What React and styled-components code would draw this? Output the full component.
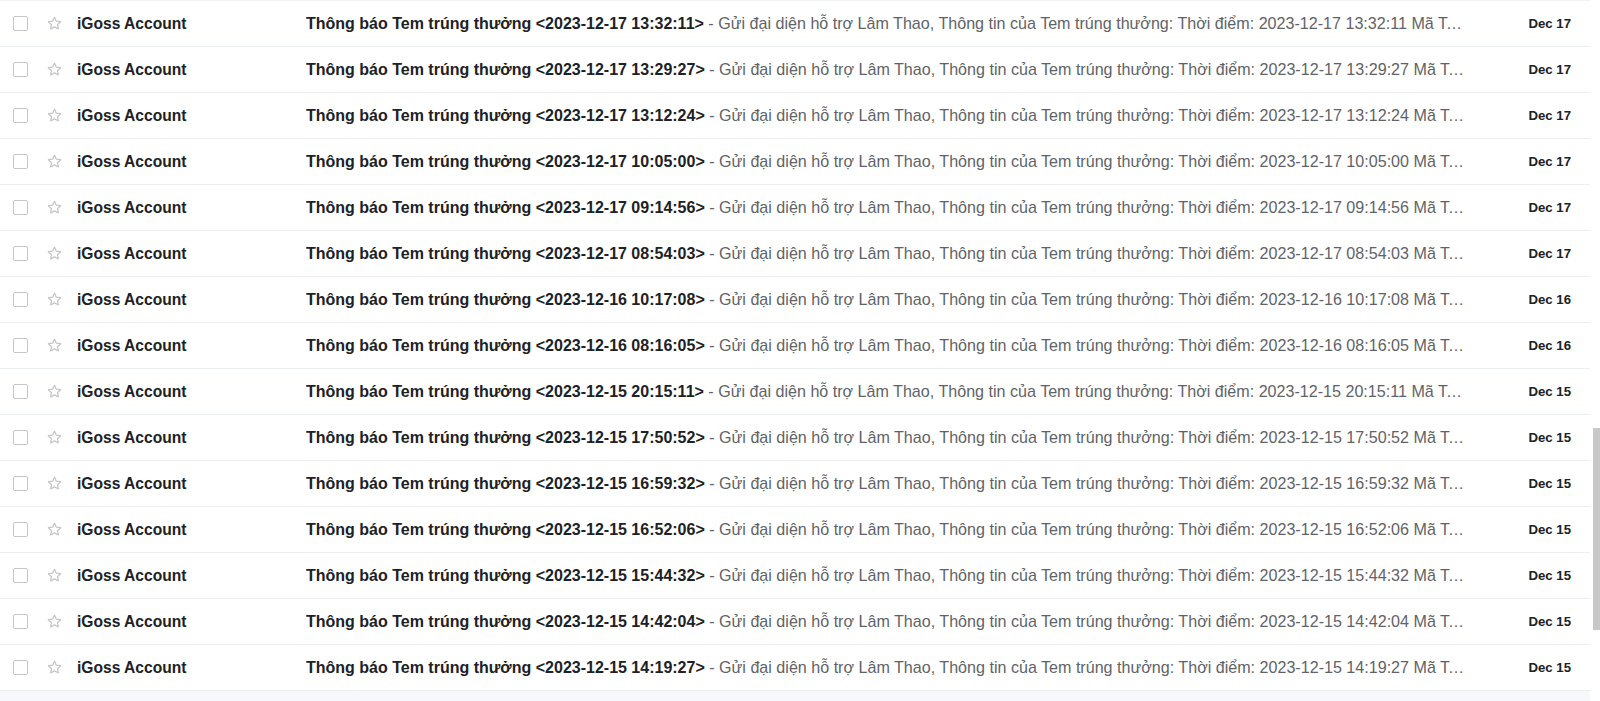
import React from "react";
import styled, { createGlobalStyle } from "styled-components";

const Global = createGlobalStyle`
  html, body { margin: 0; padding: 0; background: #ffffff; overflow: hidden; }
  body { font-family: "Liberation Sans", Arial, sans-serif; }
`;

const Page = styled.div`
  width: 1600px;
  height: 701px;
  display: flex;
  background: #ffffff;
`;

const Main = styled.div`
  flex: 1;
  display: flex;
  flex-direction: column;
  min-width: 0;
`;

const List = styled.div`
  border-top: 1px solid #f1f3f4;
`;

const Footer = styled.div`
  flex: 1;
  background: #f6f8fc;
`;

const Row = styled.div`
  height: 45px;
  display: flex;
  align-items: center;
  border-bottom: 1px solid #eceff1;
  color: #202124;
`;

const Check = styled.span`
  width: 13px;
  height: 13px;
  margin-left: 13px;
  border: 1.5px solid #c4c7c5;
  border-radius: 2px;
  flex-shrink: 0;
`;

const Star = styled.span`
  display: flex;
  margin-left: 18px;
  flex-shrink: 0;
`;

const Sender = styled.div`
  width: 229px;
  margin-left: 14px;
  flex-shrink: 0;
  font-weight: 700;
  font-size: 15.6px;
  white-space: nowrap;
`;

const Content = styled.div`
  flex: 1;
  min-width: 0;
  white-space: nowrap;
  overflow: hidden;
  text-overflow: ellipsis;
  font-size: 16px;
  color: #5f6368;
`;

const Subject = styled.span`
  font-weight: 700;
  color: #202124;
`;

const Snippet = styled.span`
  color: #5f6368;
  font-size: 16.1px;
`;

const DateCell = styled.div`
  width: 124px;
  flex-shrink: 0;
  text-align: right;
  padding-right: 19px;
  box-sizing: border-box;
  font-weight: 700;
  font-size: 13.2px;
`;

const ScrollTrack = styled.div`
  width: 10px;
  flex-shrink: 0;
  position: relative;
  background: #ffffff;
`;

const Thumb = styled.div`
  position: absolute;
  right: 0;
  top: 428px;
  width: 7px;
  height: 202px;
  background: #c8c8c8;
`;

const StarIcon = () => (
  <svg width="17" height="17" viewBox="0 0 24 24">
    <path
      d="M12 3.2l2.6 5.6 6.1.7-4.5 4.2 1.2 6-5.4-3-5.4 3 1.2-6-4.5-4.2 6.1-.7z"
      fill="none"
      stroke="#c4c7c5"
      strokeWidth="1.8"
      strokeLinejoin="round"
    />
  </svg>
);

const items = [
  ["2023-12-17 13:32:11", "Dec 17"],
  ["2023-12-17 13:29:27", "Dec 17"],
  ["2023-12-17 13:12:24", "Dec 17"],
  ["2023-12-17 10:05:00", "Dec 17"],
  ["2023-12-17 09:14:56", "Dec 17"],
  ["2023-12-17 08:54:03", "Dec 17"],
  ["2023-12-16 10:17:08", "Dec 16"],
  ["2023-12-16 08:16:05", "Dec 16"],
  ["2023-12-15 20:15:11", "Dec 15"],
  ["2023-12-15 17:50:52", "Dec 15"],
  ["2023-12-15 16:59:32", "Dec 15"],
  ["2023-12-15 16:52:06", "Dec 15"],
  ["2023-12-15 15:44:32", "Dec 15"],
  ["2023-12-15 14:42:04", "Dec 15"],
  ["2023-12-15 14:19:27", "Dec 15"],
];

export default function App() {
  return (
    <>
      <Global />
      <Page>
        <Main>
          <List>
            {items.map(([ts, date]) => (
              <Row key={ts}>
                <Check />
                <Star>
                  <StarIcon />
                </Star>
                <Sender>iGoss Account</Sender>
                <Content>
                  <Subject>Thông báo Tem trúng thưởng &lt;{ts}&gt;</Subject>
                  <Snippet>
                    {" "}- Gửi đại diện hỗ trợ Lâm Thao, Thông tin của Tem trúng thưởng: Thời điểm: {ts} Mã Tem trúng thưởng: 12345678 Số tiền thưởng
                  </Snippet>
                </Content>
                <DateCell>{date}</DateCell>
              </Row>
            ))}
          </List>
          <Footer />
        </Main>
        <ScrollTrack>
          <Thumb />
        </ScrollTrack>
      </Page>
    </>
  );
}
